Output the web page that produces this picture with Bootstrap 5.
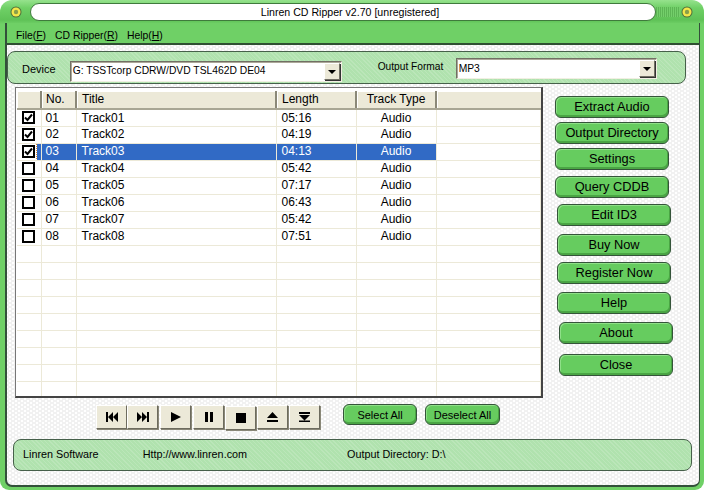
<!doctype html>
<html lang="en"><head><meta charset="utf-8"><title>Linren CD Ripper</title>
<link href="https://cdn.jsdelivr.net/npm/bootstrap@5.3.0/dist/css/bootstrap.min.css" rel="stylesheet">
<style>
html,body{margin:0;height:491px;width:706px;overflow:hidden;background:#fff}
body,button,td,th{font-family:"Liberation Sans",Arial,sans-serif;font-size:12px;color:#000;line-height:1.1}
.win{width:704px;height:490px;border-radius:12px 12px 9px 9px;background:linear-gradient(#96e28d 0,#6fd066 8px,#5fc257 20px,#6fd066 24px);padding-bottom:3px}
.cap{height:23px;padding:3px 11px 2px 10px;flex:none}
.cap svg{flex:none;margin-right:8px}
.cap svg.last{margin:0 0 0 1px}
.pill{flex:none;width:626px;height:18px;background:#fff;border:1px solid #3f7a3c;border-radius:9px;text-align:center;line-height:16px;font-size:10.6px;padding-left:14px}
.hatch{flex:1;height:10px;background:repeating-linear-gradient(90deg,#5db555 0 1px,#74cf6b 1px 2px)}
.frame{flex:1;min-height:0;margin:0 4px 0 5px;border:solid #33503a;border-width:0 1px 2px 2px;border-radius:0 0 7px 7px;overflow:hidden;
 background-color:#e8e8e8;background-image:radial-gradient(#fff 1px,transparent 1.3px),radial-gradient(#fff 1px,transparent 1.3px),linear-gradient(#f1f1f1,#f1f1f1);background-size:6px 4px;background-position:0 0,3px 2px}
.mbar{height:22px;background:#6fd066;border-bottom:2px solid #2f4f32;padding:5px 0 0 9px;gap:9px;flex:none;font-size:10.4px}
.mbar u{text-underline-offset:1px}
.grp{background-color:#b0e2ae;border:1px solid #46604a;border-radius:8px;background-image:repeating-linear-gradient(45deg,rgba(255,255,255,.14) 0 1px,transparent 1px 3px)}
.grp-top{width:679px;height:33px;margin-top:6px;padding-left:14px;flex:none;font-size:10.6px}
.lb1{margin-top:4px;font-size:11px}
.combo{background:#fff;border:1px solid #777;border-color:#716f64 #f1efe2 #f1efe2 #716f64;box-shadow:inset 1px 1px 0 #aca899;padding:0 1px 0 2px;height:21px;flex:none;font-size:10.3px}
.combo span{flex:1}
.cbtn{width:16px;height:17px;background:#ece9d8;border:1px solid;border-color:#fff #716f64 #716f64 #fff;box-shadow:1px 1px 0 #333;flex:none}
.cbtn svg{display:block}
.c1{width:272px;margin:7px 0 0 14px}
.lb2{margin:-1px 0 0 36px;width:78px;font-size:10.2px}
.c2{width:201px;margin:2px 0 0 0}
.mainrow{flex:none;margin-top:3px;height:311px}
.tblbox{width:528px;height:311px;margin-left:8px;background:#fff;border:1px solid #555;border-width:1px 2px 2px 1px;border-color:#777 #444 #444 #777;padding:3px 0 0 1px;overflow:hidden;flex:none}
.tr-table{table-layout:fixed;width:524px;margin:0;border-collapse:collapse}
.tr-table th,.tr-table td{height:17px;padding:1px 0 0 5px;font-weight:400;border:0;border-right:1px solid #ece9d8;border-bottom:1px solid #ece9d8;vertical-align:middle;white-space:nowrap;background:#fff;box-shadow:none;color:#000}
.tr-table th{height:18px;background:#ece9d8;border-right:2px solid #8a8878;border-bottom:2px solid #a8a694;box-shadow:inset 1px 1px 0 #fff}
.tr-table th:last-child{border-right:0}
.tr-table td:nth-child(2),.tr-table th:nth-child(2){padding-left:4px}
.tr-table td.mid,.tr-table th.mid{text-align:center;padding:1px 0 0}
.tr-table td.ck{padding:0 0 0 5px;line-height:0}
.tr-table tr.sel td{background:#316ac5;color:#fff}
.tr-table tr.sel td.ck{background:repeating-linear-gradient(#e08a2a 0 1px,#fff 1px 2px) 19px 0/1px 100% no-repeat,linear-gradient(90deg,#fff 19px,#316ac5 20px)}
.tr-table tr.sel td:last-child{background:#fff}
.cb{display:block;width:13px;height:13px;border:2px solid #000;background:#fff}
.sidecol{width:120px;margin-left:12px;padding-top:9px;flex:none}
.gbtn{display:block;width:114px;height:22px;padding:0;border-radius:6px;background:#66cc5f;border:1px solid #35543a;box-shadow:inset -1px -2px 0 #4aa544,inset 1px 1px 0 #8fe088;color:#000;font-size:12.8px;line-height:18px}
.gbtn:hover{background:#66cc5f;color:#000;border-color:#35543a}
.m4{margin-top:4px}.m6{margin-top:6px}.m8{margin-top:8px}.m10{margin-top:10px}
.i2{margin-left:2px}.i4{margin-left:4px}
.botrow{flex:none;margin:7px 0 0 89px;height:27px}
.tb{width:31px;height:24px;padding:0;border-radius:0;background:#ece9d8;border:1px solid;border-color:#fff #6d6b5e #6d6b5e #fff;box-shadow:1px 1px 0 #8a8878;line-height:0;flex:none}
.tb:hover{background:#ece9d8;border-color:#fff #6d6b5e #6d6b5e #fff}
.g1{margin-left:1px}.g2{margin-left:2px}
.tb.low{margin-top:1px}
.sbtn{width:74px;height:21px;margin:-1px 0 0 23px;flex:none;font-size:11px}
.sbtn2{width:75px;margin-left:8px}
.grp-bot{width:679px;height:32px;margin:7px 0 0 6px;padding-left:9px;flex:none;font-size:10.8px}
.st2{margin-left:44px}.st3{margin-left:100px}
</style></head><body>
<div class="win d-flex flex-column">
 <div class="cap d-flex align-items-center">
  <svg width="12" height="12" viewBox="0 0 12 12"><circle cx="6" cy="6" r="5.5" fill="#4f6f3c"/><circle cx="6" cy="6" r="4.500" fill="#f4e64a"/><circle cx="6" cy="6" r="2.200" fill="#8aa04a"/></svg>
  <div class="pill">Linren CD Ripper v2.70 [unregistered]</div>
  <div class="hatch"></div>
  <svg class="last" width="12" height="12" viewBox="0 0 12 12"><circle cx="6" cy="6" r="5.5" fill="#4f6f3c"/><circle cx="6" cy="6" r="4.500" fill="#f4e64a"/><circle cx="6" cy="6" r="2.200" fill="#8aa04a"/></svg>
 </div>
 <div class="frame d-flex flex-column">
  <div class="mbar d-flex align-items-center">
   <span>File(<u>F</u>)</span><span>CD Ripper(<u>R</u>)</span><span>Help(<u>H</u>)</span>
  </div>
  <div class="grp grp-top d-flex align-items-center">
   <span class="lb1">Device</span>
   <div class="combo c1 d-flex align-items-center"><span>G: TSSTcorp CDRW/DVD TSL462D DE04</span><div class="cbtn"><svg width="14" height="15" viewBox="0 0 14 15"><path d="M3 6h8L7 10z" fill="#000"/></svg></div></div>
   <span class="lb2">Output Format</span>
   <div class="combo c2 d-flex align-items-center"><span>MP3</span><div class="cbtn"><svg width="14" height="15" viewBox="0 0 14 15"><path d="M3 6h8L7 10z" fill="#000"/></svg></div></div>
  </div>
  <div class="mainrow d-flex">
   <div class="tblbox">
    <table class="table tr-table">
     <colgroup><col style="width:24px"><col style="width:35px"><col style="width:200px"><col style="width:80px"><col style="width:80px"><col></colgroup>
     <thead><tr><th></th><th>No.</th><th>Title</th><th>Length</th><th class="mid">Track Type</th><th></th></tr></thead>
     <tbody>
      <tr><td class="ck"><span class="cb"><svg width="9" height="9" viewBox="0 0 9 9"><path d="M1 4.500l2.500 2.500L8 1.500" fill="none" stroke="#000" stroke-width="2"/></svg></span></td><td>01</td><td>Track01</td><td>05:16</td><td class="mid">Audio</td><td></td></tr>
      <tr><td class="ck"><span class="cb"><svg width="9" height="9" viewBox="0 0 9 9"><path d="M1 4.500l2.500 2.500L8 1.500" fill="none" stroke="#000" stroke-width="2"/></svg></span></td><td>02</td><td>Track02</td><td>04:19</td><td class="mid">Audio</td><td></td></tr>
      <tr class="sel"><td class="ck"><span class="cb"><svg width="9" height="9" viewBox="0 0 9 9"><path d="M1 4.500l2.500 2.500L8 1.500" fill="none" stroke="#000" stroke-width="2"/></svg></span></td><td>03</td><td>Track03</td><td>04:13</td><td class="mid">Audio</td><td></td></tr>
      <tr><td class="ck"><span class="cb"></span></td><td>04</td><td>Track04</td><td>05:42</td><td class="mid">Audio</td><td></td></tr>
      <tr><td class="ck"><span class="cb"></span></td><td>05</td><td>Track05</td><td>07:17</td><td class="mid">Audio</td><td></td></tr>
      <tr><td class="ck"><span class="cb"></span></td><td>06</td><td>Track06</td><td>06:43</td><td class="mid">Audio</td><td></td></tr>
      <tr><td class="ck"><span class="cb"></span></td><td>07</td><td>Track07</td><td>05:42</td><td class="mid">Audio</td><td></td></tr>
      <tr><td class="ck"><span class="cb"></span></td><td>08</td><td>Track08</td><td>07:51</td><td class="mid">Audio</td><td></td></tr>
      <tr><td></td><td></td><td></td><td></td><td></td><td></td></tr>
      <tr><td></td><td></td><td></td><td></td><td></td><td></td></tr>
      <tr><td></td><td></td><td></td><td></td><td></td><td></td></tr>
      <tr><td></td><td></td><td></td><td></td><td></td><td></td></tr>
      <tr><td></td><td></td><td></td><td></td><td></td><td></td></tr>
      <tr><td></td><td></td><td></td><td></td><td></td><td></td></tr>
      <tr><td></td><td></td><td></td><td></td><td></td><td></td></tr>
      <tr><td></td><td></td><td></td><td></td><td></td><td></td></tr>
      <tr><td></td><td></td><td></td><td></td><td></td><td></td></tr>
     </tbody>
    </table>
   </div>
   <div class="sidecol">
    <button class="btn gbtn">Extract Audio</button>
    <button class="btn gbtn m4">Output Directory</button>
    <button class="btn gbtn m4">Settings</button>
    <button class="btn gbtn m6">Query CDDB</button>
    <button class="btn gbtn m6 i2">Edit ID3</button>
    <button class="btn gbtn m8 i2">Buy Now</button>
    <button class="btn gbtn m6 i2">Register Now</button>
    <button class="btn gbtn m8 i2">Help</button>
    <button class="btn gbtn m8 i4">About</button>
    <button class="btn gbtn m10 i4">Close</button>
   </div>
  </div>
  <div class="botrow d-flex align-items-start">
   <button class="btn tb" aria-label="Previous"><svg width="12" height="10" viewBox="0 0 12 10"><path d="M0 0h2v10H0zM2 5l5-5v10zM7 5l5-5v10z"/></svg></button>
   <button class="btn tb" aria-label="Next"><svg width="12" height="10" viewBox="0 0 12 10"><path d="M10 0h2v10h-2zM10 5L5 0v10zM5 5L0 0v10z"/></svg></button>
   <button class="btn tb g2" aria-label="Play"><svg width="10" height="10" viewBox="0 0 10 10"><path d="M0 0l10 5-10 5z"/></svg></button>
   <button class="btn tb g2" aria-label="Pause"><svg width="8" height="10" viewBox="0 0 8 10"><path d="M0 0h3v10H0zM5 0h3v10H5z"/></svg></button>
   <button class="btn tb g1 low" aria-label="Stop"><svg width="10" height="10" viewBox="0 0 10 10"><path d="M0 0h10v10H0z"/></svg></button>
   <button class="btn tb g1" aria-label="Eject"><svg width="11" height="10" viewBox="0 0 11 10"><path d="M5.500 0L11 6H0zM0 8h11v2H0z"/></svg></button>
   <button class="btn tb g1" aria-label="Load"><svg width="11" height="10" viewBox="0 0 11 10"><path d="M0 0h11v2H0zM5.500 8.500L0 3h11zM0 8.500h11V10H0z"/></svg></button>
   <button class="btn gbtn sbtn">Select All</button>
   <button class="btn gbtn sbtn sbtn2">Deselect All</button>
  </div>
  <div class="grp grp-bot d-flex align-items-center">
   <span>Linren Software</span><span class="st2">Http://www.linren.com</span><span class="st3">Output Directory: D:\</span>
  </div>
 </div>
</div>
</body></html>
